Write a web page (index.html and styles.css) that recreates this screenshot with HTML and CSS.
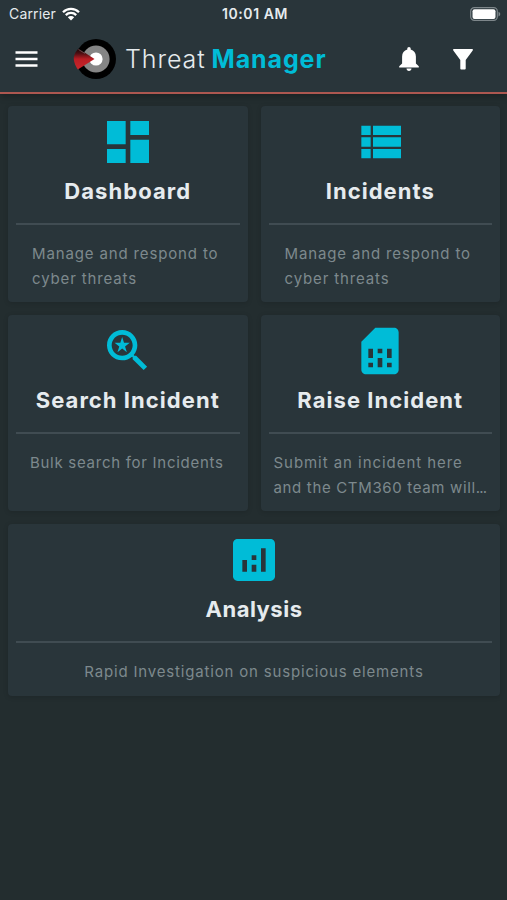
FILE: index.html
```html
<!DOCTYPE html>
<html lang="en">
<head>
    <meta charset="UTF-8">
    <meta name="viewport" content="width=device-width, initial-scale=1.0">
    <title>Threat Manager</title>
    <link rel="stylesheet" href="styles.css">
</head>
<body>
    <header class="header">
        <div class="status-bar">
            <div class="carrier">
                <span>Carrier</span>
                <svg class="wifi" viewBox="0 0 18 14">
                    <path d="M1 5.2a11.4 11.4 0 0 1 16 0M3.8 8.1a7.4 7.4 0 0 1 10.4 0" fill="none" stroke="#fff" stroke-width="2.3"/>
                    <path d="M5.8 10.2a4.6 4.6 0 0 1 6.4 0L9 13.6z" fill="#fff"/>
                </svg>
            </div>
            <span class="clock">10:01 AM</span>
            <svg class="battery" viewBox="0 0 31 14">
                <rect x=".7" y=".7" width="26.6" height="12.6" rx="3.6" fill="none" stroke="#7d868a" stroke-width="1.2"/>
                <rect x="2.5" y="2.3" width="23" height="9.6" rx="2" fill="#fff"/>
                <path d="M28.5 4.8c2.3.8 2.3 3.8 0 4.6z" fill="#7d868a"/>
            </svg>
        </div>
        <div class="nav">
            <button class="icon-button" aria-label="Menu">
                <svg class="menu" viewBox="0 0 22 16">
                    <path d="M0 1.5h22M0 8h22M0 14.5h22" stroke="#fff" stroke-width="2.3"/>
                </svg>
            </button>
            <svg class="logo" viewBox="0 0 44 42">
                <defs>
                    <linearGradient id="sweep" x1="0" y1="0" x2="0" y2="1">
                        <stop offset="0" stop-color="#1a0405"/>
                        <stop offset=".22" stop-color="#4a0d11"/>
                        <stop offset=".5" stop-color="#b81d24"/>
                        <stop offset="1" stop-color="#c9262c"/>
                    </linearGradient>
                </defs>
                <circle cx="23" cy="21" r="20" fill="#000"/>
                <circle cx="23" cy="21" r="13.6" fill="#858585"/>
                <circle cx="23" cy="21" r="6.6" fill="#fff"/>
                <path d="M5.5 10.5L21.5 21 4.8 31.5C1.6 27 .6 22 .8 19.5 1.3 16 3.2 12.8 5.5 10.5z" fill="url(#sweep)"/>
                <path d="M5.5 11.5l6.5 4" stroke="#7a6465" stroke-width=".7"/>
            </svg>
            <h1 class="brand"><span class="brand-light">Threat</span> <span class="brand-bold">Manager</span></h1>
            <button class="icon-button bell-button" aria-label="Notifications">
                <svg class="bell" viewBox="0 0 20 24">
                    <path d="M10 0c1 0 1.7.8 1.7 1.8v.6c3.2.8 5.2 3.4 5.2 7v7.2l2.9 2.6v1.4H.2v-1.4l2.9-2.6V9.4c0-3.6 2-6.2 5.2-7v-.6C8.3.8 9 0 10 0zM7.5 21.6h5c0 1.4-1.1 2.4-2.5 2.4s-2.5-1-2.5-2.4z" fill="#fff"/>
                </svg>
            </button>
            <button class="icon-button" aria-label="Filter">
                <svg class="filter" viewBox="0 0 20 21">
                    <path d="M.8 0h18.4c.7 0 1 .8.5 1.5L12.7 11v8.4c0 .7-.5 1.1-1.1 1.1H8.4c-.6 0-1.1-.4-1.1-1.1V11L.3 1.5C-.2.8.1 0 .8 0z" fill="#fff"/>
                </svg>
            </button>
        </div>
    </header>

    <main class="cards">
        <section class="card">
            <svg class="card-icon" viewBox="0 0 24 24"><path d="M3 13h8V3H3v10zm0 8h8v-6H3v6zm10 0h8V11h-8v10zm0-18v6h8V3h-8z"/></svg>
            <h2 class="card-title">Dashboard</h2>
            <p class="card-text">Manage and respond to cyber threats</p>
        </section>
        <section class="card">
            <svg class="card-icon" viewBox="0 0 24 24"><path d="M4 14h4v-4H4v4zm0 5h4v-4H4v4zM4 9h4V5H4v4zm5 5h12v-4H9v4zm0 5h12v-4H9v4zM9 5v4h12V5H9z"/></svg>
            <h2 class="card-title">Incidents</h2>
            <p class="card-text">Manage and respond to cyber threats</p>
        </section>
        <section class="card">
            <svg class="card-icon" viewBox="0 0 24 24">
                <path d="M15.5 14h-.79l-.28-.27C15.41 12.59 16 11.11 16 9.5 16 5.91 13.09 3 9.5 3S3 5.91 3 9.5 5.91 16 9.5 16c1.61 0 3.09-.59 4.23-1.57l.27.28v.79l4.7 4.69 1.49-1.49-4.69-4.7zm-6 0C7.01 14 5 11.99 5 9.5S7.01 5 9.5 5 14 7.01 14 9.5 11.99 14 9.5 14z"/>
                <path d="M10.29 8.44L9.5 6l-.79 2.44H6.25l2.01 1.59-.77 2.47 2.01-1.53 2.01 1.53-.77-2.47 2.01-1.59z"/>
            </svg>
            <h2 class="card-title">Search Incident</h2>
            <p class="card-text text-search">Bulk search for Incidents</p>
        </section>
        <section class="card">
            <svg class="card-icon" viewBox="0 0 24 24"><path d="M19.99 4c0-1.1-.89-2-1.99-2h-8L4 8v12c0 1.1.9 2 2 2h12.01c1.1 0 1.99-.9 1.99-2l-.01-16zM9 19H7v-2h2v2zm8 0h-2v-2h2v2zm-8-4H7v-4h2v4zm4 4h-2v-4h2v4zm0-6h-2v-2h2v2zm4 2h-2v-4h2v4z"/></svg>
            <h2 class="card-title">Raise Incident</h2>
            <p class="card-text text-raise">Submit an incident here<br><span class="clipped">and the CTM360 team will<span class="dots">...</span></span></p>
        </section>
        <section class="card card-wide">
            <svg class="card-icon" viewBox="0 0 24 24"><path d="M19 3H5c-1.1 0-2 .9-2 2v14c0 1.1.9 2 2 2h14c1.1 0 2-.9 2-2V5c0-1.1-.9-2-2-2zM9 17H7v-5h2v5zm4 0h-2v-3h2v3zm0-5h-2v-2h2v2zm4 5h-2V7h2v10z"/></svg>
            <h2 class="card-title title-analysis">Analysis</h2>
            <p class="card-text text-analysis">Rapid Investigation on suspicious elements</p>
        </section>
    </main>
</body>
</html>
```
FILE: styles.css
```css
* {
    margin: 0;
    padding: 0;
    box-sizing: border-box;
}

:root {
    --background: #232d2f;
    --surface: #29353a;
    --accent: #00bcd7;
    --line: #404c52;
    --text: #e6ebee;
    --muted: #7d898d;
}

body {
    min-height: 100vh;
    background-color: var(--background);
    color: var(--text);
    font-family: Inter, "Liberation Sans", sans-serif;
}

/* Header */
.header {
    height: 94px;
    background-color: var(--surface);
    border-bottom: 2px solid #ad5750;
    box-shadow: 0 2px 7px rgba(0, 0, 0, 0.3);
}

.status-bar {
    display: grid;
    grid-template-columns: 1fr auto 1fr;
    align-items: center;
    height: 27px;
    padding: 0 6px 0 9px;
    font-size: 14px;
}

.carrier {
    display: flex;
    align-items: center;
    gap: 6px;
    letter-spacing: 0.15px;
}

.wifi {
    width: 18px;
    height: 14px;
}

.clock {
    font-weight: 600;
    letter-spacing: 0.6px;
}

.battery {
    width: 31px;
    height: 14px;
    justify-self: end;
}

.nav {
    display: flex;
    align-items: center;
    height: 64px;
    padding: 0 34px 0 15px;
}

.icon-button {
    display: flex;
    border: none;
    background: none;
}

.menu {
    width: 23px;
    height: 16px;
}

.logo {
    width: 44px;
    height: 42px;
    margin-left: 35px;
}

.brand {
    flex: 1;
    margin-left: 8px;
    font-size: 25px;
    white-space: nowrap;
}

.brand-light {
    font-weight: 300;
    letter-spacing: 0.9px;
}

.brand-bold {
    color: var(--accent);
    font-weight: 700;
    letter-spacing: 0.9px;
}

.bell-button {
    margin-right: 34px;
}

.bell {
    width: 20px;
    height: 24px;
}

.filter {
    width: 20px;
    height: 21px;
}

/* Cards */
.cards {
    display: grid;
    grid-template-columns: 1fr 1fr;
    grid-template-rows: 196px 196px 172px;
    gap: 13px;
    padding: 12px 7px 0 8px;
}

.card {
    padding: 8px;
    background-color: var(--surface);
    border-radius: 4px;
    box-shadow: 0 1px 5px rgba(0, 0, 0, 0.15);
}

.card-wide {
    grid-column: span 2;
}

.card-icon {
    display: block;
    width: 56px;
    height: 56px;
    margin: 0 auto;
    fill: var(--accent);
}

.card-title {
    height: 55px;
    border-bottom: 2px solid var(--line);
    font-size: 22px;
    font-weight: 700;
    letter-spacing: 1.05px;
    line-height: 42px;
    text-align: center;
    white-space: nowrap;
}

.title-analysis {
    letter-spacing: 0.5px;
}

.card-text {
    padding: 17px 0 0 16px;
    color: var(--muted);
    font-size: 15px;
    letter-spacing: 0.86px;
    line-height: 24.6px;
}

.text-search {
    padding-left: 14px;
    letter-spacing: 0.72px;
}

.text-raise {
    padding-left: 5px;
    letter-spacing: 0.95px;
    white-space: nowrap;
}

.clipped {
    letter-spacing: 0.66px;
}

.dots {
    letter-spacing: -0.8px;
}

.text-analysis {
    padding-left: 0;
    letter-spacing: 0.82px;
    text-align: center;
}
```
